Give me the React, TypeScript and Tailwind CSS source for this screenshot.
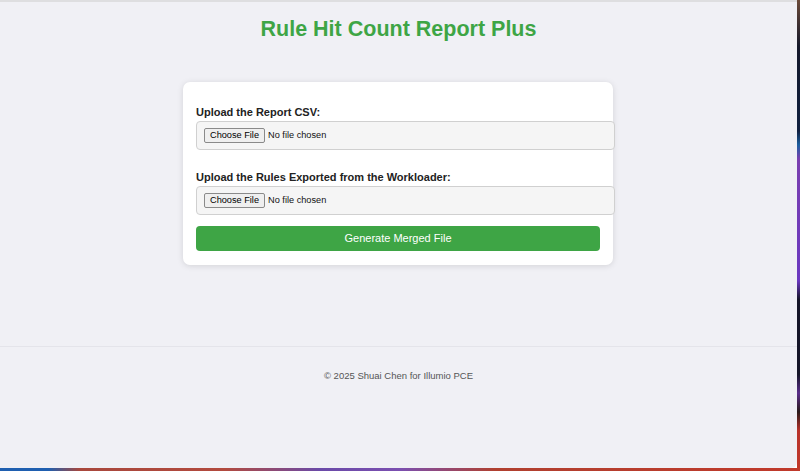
import React from 'react';

const font = { fontFamily: '"Liberation Sans", Arial, sans-serif' };

const FileField: React.FC<{ id: string; label: string }> = ({ id, label }) => (
  <div>
    <label htmlFor={id} className="block text-[11px] leading-[16px] font-bold text-[#222] mb-[1px]">
      {label}
    </label>
    <div className="w-[419px] h-[29px] flex items-center px-[7px] bg-[#f5f5f5] border border-[#d0d0d0] rounded-[4px]">
      <input
        id={id}
        type="file"
        className="text-[9.2px] text-[#111] file:h-[15px] file:px-[5px] file:mr-[3px] file:border file:border-[#8a8a8a] file:rounded-[2px] file:bg-[#efefef] file:text-[9.2px] file:text-black"
        style={font}
      />
    </div>
  </div>
);

export default function App() {
  return (
    <div className="w-[800px] h-[471px] flex flex-col overflow-hidden" style={font}>
      <div className="flex h-[468px]">
        <div className="w-[797px] h-[468px] bg-[#f0f0f5] border-t-2 border-[#dedee0] rounded-br-[6px] flex flex-col">
          <h1 className="mt-[14px] text-center text-[21.5px] leading-[26px] font-bold text-[#3ea545]">
            Rule Hit Count Report Plus
          </h1>

          <div className="mt-[40px] ml-[183px] w-[430px] bg-white rounded-[7px] shadow-[0_1px_6px_rgba(0,0,0,0.12)] pl-[13px] pr-[13px] pt-[22px] pb-[14px]">
            <FileField id="report-csv" label="Upload the Report CSV:" />
            <div className="mt-[19px]">
              <FileField id="rules-export" label="Upload the Rules Exported from the Workloader:" />
            </div>
            <button className="mt-[11px] w-[404px] h-[25px] bg-[#3ea545] text-white text-[11px] rounded-[4px]">
              Generate Merged File
            </button>
          </div>

          <div className="mt-[81px] border-t border-[#e4e4ea]">
            <p className="mt-[22px] text-center text-[9.5px] leading-[14px] text-[#555]">
              © 2025 Shuai Chen for Illumio PCE
            </p>
          </div>
        </div>
        <div className="w-[3px] h-full bg-[linear-gradient(to_bottom,#6b4a3a_0%,#14182a_10%,#102040_28%,#1c5fa0_31%,#7a3fb0_34%,#6a38c0_60%,#151528_64%,#151528_80%,#5a2d8a_84%,#2a1a1a_88%,#b8322a_92%,#c0392b_100%)]" />
      </div>
      <div className="h-[3px] w-full bg-[linear-gradient(to_right,#1f5fb0_0%,#1f5fb0_6%,#a8473c_10%,#b24a3e_28%,#6a4aa8_40%,#7b4fb0_50%,#b0402f_62%,#c0392b_100%)]" />
    </div>
  );
}
